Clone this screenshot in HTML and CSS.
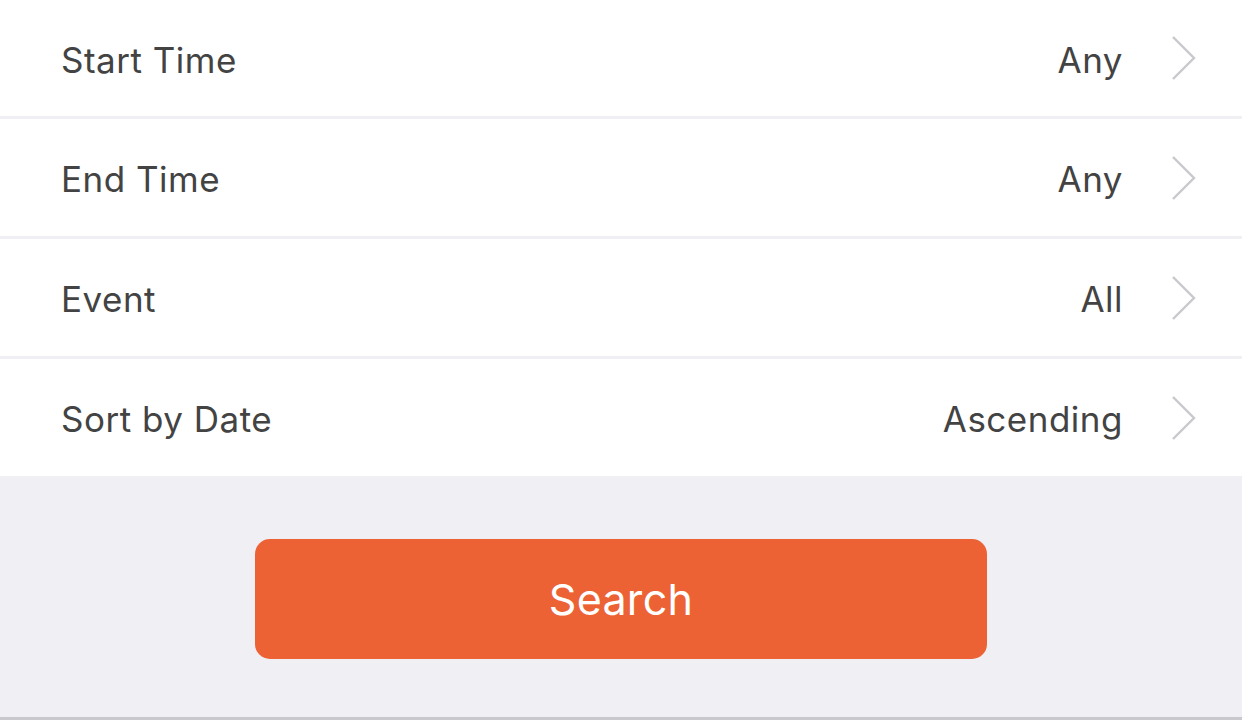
FILE: index.html
```html
<!DOCTYPE html>
<html>
<head>
<meta charset="utf-8">
<link rel="stylesheet" href="styles.css">
</head>
<body>
<div class="page">
  <div class="list">
    <div class="row first">
      <span class="label">Start Time</span>
      <span class="value">Any</span>
      <svg class="chev" width="26" height="44" viewBox="0 0 26 44"><path d="M2 1 L23 22 L2 43" fill="none" stroke="#c8c8cd" stroke-width="2.4"/></svg>
    </div>
    <div class="row">
      <span class="label">End Time</span>
      <span class="value">Any</span>
      <svg class="chev" width="26" height="44" viewBox="0 0 26 44"><path d="M2 1 L23 22 L2 43" fill="none" stroke="#c8c8cd" stroke-width="2.4"/></svg>
    </div>
    <div class="row">
      <span class="label">Event</span>
      <span class="value">All</span>
      <svg class="chev" width="26" height="44" viewBox="0 0 26 44"><path d="M2 1 L23 22 L2 43" fill="none" stroke="#c8c8cd" stroke-width="2.4"/></svg>
    </div>
    <div class="row last">
      <span class="label">Sort by Date</span>
      <span class="value">Ascending</span>
      <svg class="chev" width="26" height="44" viewBox="0 0 26 44"><path d="M2 1 L23 22 L2 43" fill="none" stroke="#c8c8cd" stroke-width="2.4"/></svg>
    </div>
  </div>
  <div class="footer">
    <button class="search">Search</button>
  </div>
</div>
</body>
</html>
```
FILE: styles.css
```css
html, body {
  margin: 0;
  padding: 0;
}
body {
  width: 1242px;
  height: 720px;
  overflow: hidden;
  background: #efeff4;
  font-family: Inter, "Open Sans", sans-serif;
}
.page {
  display: flex;
  flex-direction: column;
  height: 720px;
}
.list {
  background: #ffffff;
}
.row {
  display: flex;
  align-items: center;
  height: 117px;
  padding: 0 45px 0 61px;
  border-bottom: 3px solid #efeff4;
}
.row.first {
  height: 116px;
}
.row.last {
  border-bottom: none;
}
.label,
.value {
  font-size: 35px;
  color: #434343;
  letter-spacing: 0.5px;
  padding-top: 3px;
}
.label {
  flex: 1;
}
.value {
  margin-right: 48px;
}
.chev {
  display: block;
}
.footer {
  flex: 1;
  display: flex;
  justify-content: center;
  padding-top: 63px;
  border-bottom: 3px solid #c8c7cc;
}
.search {
  width: 732px;
  height: 120px;
  border: none;
  border-radius: 15px;
  background: #ec6234;
  color: #ffffff;
  font-family: Inter, "Open Sans", sans-serif;
  font-size: 43px;
  letter-spacing: 0.3px;
  padding: 0;
}
```
